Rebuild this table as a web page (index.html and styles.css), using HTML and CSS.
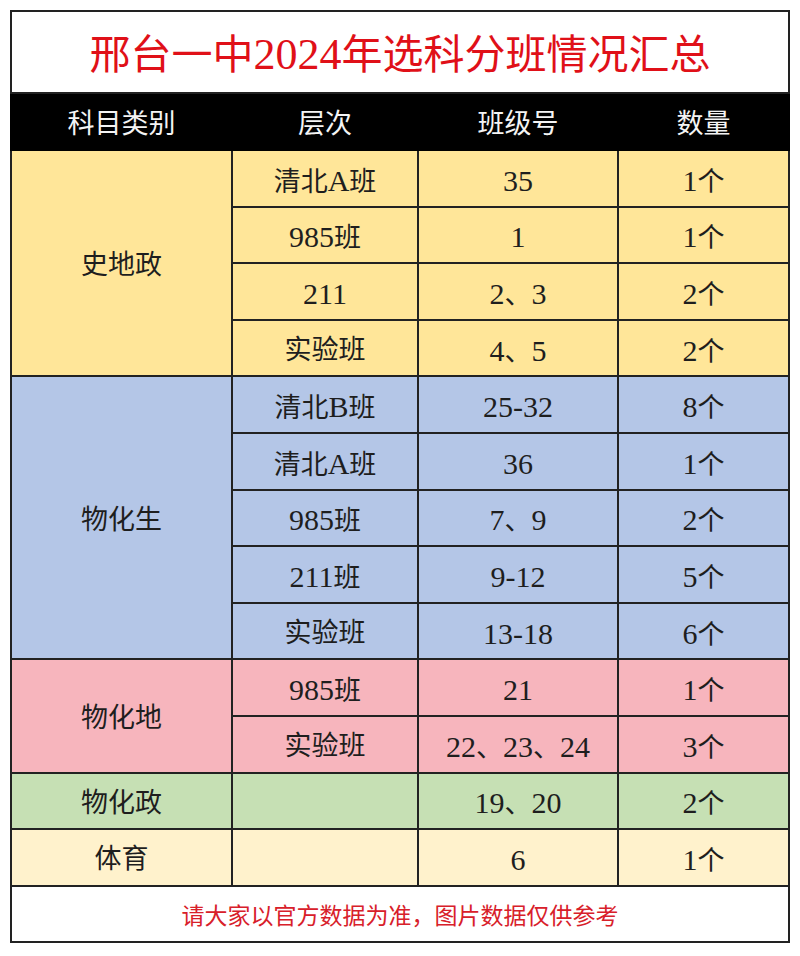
FILE: index.html
```html
<!DOCTYPE html>
<html lang="zh-CN">
<head>
<meta charset="utf-8">
<title>邢台一中2024年选科分班情况汇总</title>
<link rel="stylesheet" href="styles.css">
</head>
<body>
<div class="sheet">
<table class="summary">
  <colgroup>
    <col class="c1"><col class="c2"><col class="c3"><col class="c4">
  </colgroup>
  <tr class="title-row"><td colspan="4" class="title">邢台一中<span class="tn">2024</span>年选科分班情况汇总</td></tr>
  <tr class="head-row"><th>科目类别</th><th>层次</th><th>班级号</th><th>数量</th></tr>

  <tr class="yellow"><td rowspan="4">史地政</td><td>清北<span class="n">A</span>班</td><td><span class="n">35</span></td><td><span class="n">1</span>个</td></tr>
  <tr class="yellow"><td><span class="n">985</span>班</td><td><span class="n">1</span></td><td><span class="n">1</span>个</td></tr>
  <tr class="yellow"><td><span class="n">211</span></td><td><span class="n">2</span>、<span class="n">3</span></td><td><span class="n">2</span>个</td></tr>
  <tr class="yellow"><td>实验班</td><td><span class="n">4</span>、<span class="n">5</span></td><td><span class="n">2</span>个</td></tr>

  <tr class="blue"><td rowspan="5">物化生</td><td>清北<span class="n">B</span>班</td><td><span class="n">25-32</span></td><td><span class="n">8</span>个</td></tr>
  <tr class="blue"><td>清北<span class="n">A</span>班</td><td><span class="n">36</span></td><td><span class="n">1</span>个</td></tr>
  <tr class="blue"><td><span class="n">985</span>班</td><td><span class="n">7</span>、<span class="n">9</span></td><td><span class="n">2</span>个</td></tr>
  <tr class="blue"><td><span class="n">211</span>班</td><td><span class="n">9-12</span></td><td><span class="n">5</span>个</td></tr>
  <tr class="blue"><td>实验班</td><td><span class="n">13-18</span></td><td><span class="n">6</span>个</td></tr>

  <tr class="pink"><td rowspan="2">物化地</td><td><span class="n">985</span>班</td><td><span class="n">21</span></td><td><span class="n">1</span>个</td></tr>
  <tr class="pink"><td>实验班</td><td><span class="n">22</span>、<span class="n">23</span>、<span class="n">24</span></td><td><span class="n">3</span>个</td></tr>

  <tr class="green"><td>物化政</td><td></td><td><span class="n">19</span>、<span class="n">20</span></td><td><span class="n">2</span>个</td></tr>
  <tr class="cream"><td>体育</td><td></td><td><span class="n">6</span></td><td><span class="n">1</span>个</td></tr>

  <tr class="foot-row"><td colspan="4" class="note">请大家以官方数据为准，图片数据仅供参考</td></tr>
</table>
</div>
</body>
</html>
```

FILE: styles.css
```css
html, body {
  margin: 0;
  padding: 0;
  background: #ffffff;
}

.sheet {
  padding: 10px 0 0 10px;
}

.summary {
  border-collapse: collapse;
  width: 778px;
  table-layout: fixed;
  border: 2px solid #222;
  font-family: "Liberation Serif", "Noto Sans CJK SC", serif;
  color: #1e1e1e;
}

.c1 { width: 221px; }
.c2 { width: 186px; }
.c3 { width: 200px; }
.c4 { width: 171px; }

.summary td,
.summary th {
  border: 2px solid #222;
  text-align: center;
  vertical-align: middle;
  padding: 5px 0 0 0;
  font-size: 27px;
  font-weight: normal;
  height: 49.6px;
  line-height: 1;
}

.n {
  font-size: 30px;
}

.title-row td {
  height: 75px;
  background: #fff;
}

.title {
  color: #e01018;
  font-weight: bold;
  font-size: 41px !important;
}

.tn {
  font-size: 44px;
}

.head-row th {
  background: #000;
  color: #f4f4f4;
  height: 50px;
  border-color: #000;
}

.yellow td { background: #ffe699; }
.blue td { background: #b4c6e7; }
.pink td { background: #f7b5bd; }
.green td { background: #c6e0b4; }
.cream td { background: #fff2cc; }

.foot-row td {
  background: #fff;
  height: 49px;
}

.note {
  color: #d8202a;
  font-size: 23px !important;
}
```
